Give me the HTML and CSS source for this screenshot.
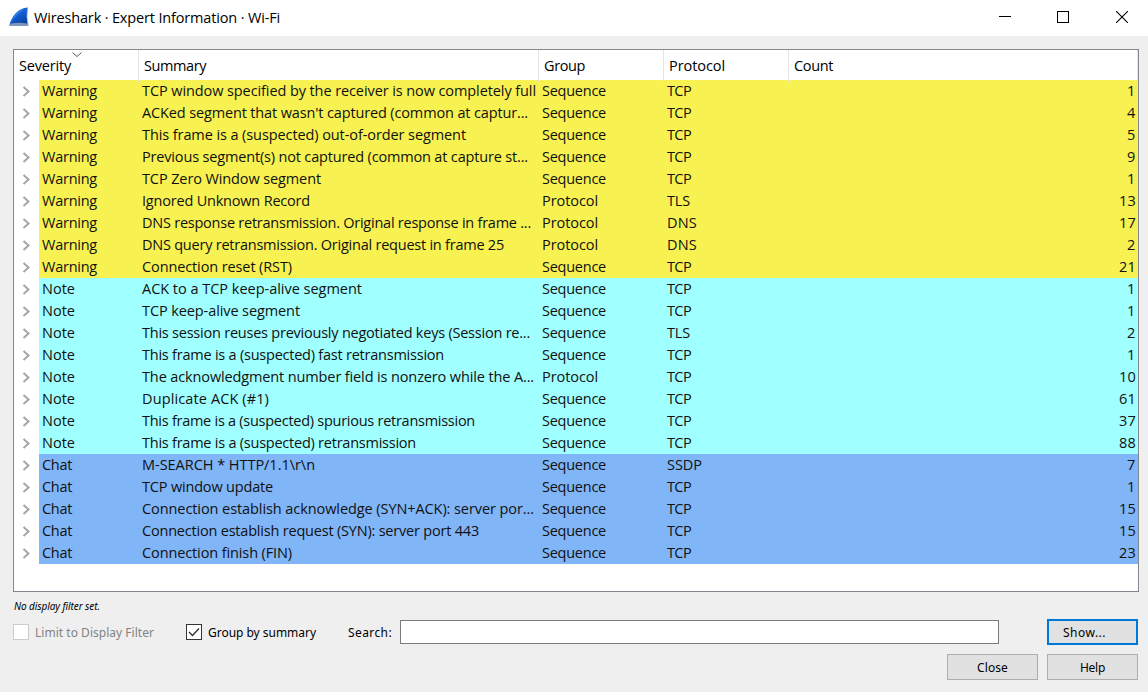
FILE: index.html
```html
<!DOCTYPE html>
<html lang="en">
<head>
<meta charset="utf-8">
<title>Wireshark · Expert Information · Wi-Fi</title>
<link rel="stylesheet" href="styles.css">
</head>
<body>
<header class="titlebar">
  <svg class="logo" width="20" height="20" viewBox="0 0 20 20">
    <defs>
      <linearGradient id="fin" x1="0" y1="0" x2="0.5" y2="1"><stop offset="0" stop-color="#1b67dc"/><stop offset=".45" stop-color="#1360d8"/><stop offset="1" stop-color="#0b43a8"/></linearGradient>
      <linearGradient id="shine" x1="0" y1="0" x2="1" y2="1"><stop offset="0" stop-color="#6db4f8"/><stop offset="1" stop-color="#1560d8" stop-opacity="0"/></linearGradient>
    </defs>
    <path d="M.3 18.6C3 9 8.500 1.100 19 .5C17.600 6 17.600 13 19.300 18.600Z" fill="url(#fin)"/>
    <path d="M2 16C5 8 9 2.500 17.500 1.300C11 4 7 9 2 16Z" fill="url(#shine)"/>
    <path d="M.3 18.700L1 16.700Q10 14.800 18.800 16.700L19.400 18.700Z" fill="#7d94b8"/>
    <path d="M18.600 1Q17.200 9 19 18" fill="none" stroke="#9fb4d4" stroke-width=".8"/>
  </svg>
  <h1 class="title"><span data-w="246">Wireshark · Expert Information · Wi-Fi</span></h1>
  <div class="controls">
    <svg width="12" height="12"><path d="M0 5.500H12" stroke="#000"/></svg>
    <svg width="12" height="12"><rect x=".5" y=".5" width="11" height="11" fill="none" stroke="#000"/></svg>
    <svg class="close" width="12" height="12"><path d="M0 0L12 12M12 0L0 12" stroke="#000" stroke-width="1.100"/></svg>
  </div>
</header>
<main class="dialog">
  <section class="tree">
    <div class="head">
      <div><svg class="sort" width="10" height="5"><path d="M.5 .5L5 4.500L9.500 .5" fill="none" stroke="#555"/></svg><span data-w="52">Severity</span></div>
      <div><span data-w="62">Summary</span></div>
      <div><span data-w="41">Group</span></div>
      <div><span data-w="56">Protocol</span></div>
      <div><span data-w="39">Count</span></div>
    </div>
    <div id="rows"></div>
  </section>
  <p class="hint"><span data-w="86">No display filter set.</span></p>
  <div class="options">
    <label class="check off"><i class="box"></i><span data-w="119">Limit to Display Filter</span></label>
    <label class="check group"><i class="box"><svg width="14" height="14"><path d="M2 7L5.500 10.500L12 3.500" fill="none" stroke="#333" stroke-width="1.400"/></svg></i><span data-w="108">Group by summary</span></label>
    <span class="searchlabel"><span data-w="44">Search:</span></span>
    <div class="search"></div>
    <div class="button primary"><span data-w="43">Show...</span></div>
  </div>
  <div class="actions">
    <div class="button"><span data-w="31">Close</span></div>
    <div class="button"><span data-w="25">Help</span></div>
  </div>
</main>
<script src="app.js"></script>
</body>
</html>
```
FILE: styles.css
```css
* { box-sizing: border-box; }
body { margin: 0; width: 1148px; height: 692px; overflow: hidden; background: #efefef; color: #000; font-family: "Open Sans", "Noto Sans", sans-serif; font-size: 14.5px; }
span { white-space: pre; }
svg { display: block; flex: none; }
.titlebar { height: 36px; background: #fff; display: flex; align-items: center; padding: 0 20px 0 9px; }
.logo { margin-top: -2px; }
.title { margin: 0 0 0 5px; font-size: 14.5px; font-weight: 400; line-height: 36px; }
.controls { margin-left: auto; display: flex; gap: 46px; margin-top: -2px; }
.close { margin-left: 1px; }
.dialog { padding: 13px 9px 0 13px; }
.tree { width: 1126px; height: 543px; border: 1px solid #828790; background: #fff; }
.head { height: 30px; display: grid; grid-template-columns: 125px 400px 125px 125px 349px; }
.head div { border-right: 1px solid #e5e5e5; padding-left: 5px; line-height: 32px; position: relative; }
.sort { position: absolute; left: 58px; top: 2px; }
.row { height: 22px; display: grid; grid-template-columns: 25px 100px 400px 125px 1fr auto; line-height: 22px; padding-right: 2px; color: #111; }
.row span { padding-left: 3px; }
.arrow { background: #fff; padding: 6px 0 0 8px; }
.warning { background: #f7f251; }
.note { background: #a0ffff; }
.chat { background: #80b5f7; }
.hint { margin: 5px 0 0 1px; height: 17px; line-height: 18px; font-size: 10px; font-style: italic; font-family: "Noto Sans", sans-serif; }
.options { margin-top: 5px; height: 26px; display: flex; align-items: center; font: 12px "Noto Sans", sans-serif; }
.check { display: flex; align-items: center; gap: 6px; width: 173px; }
.group { width: 162px; }
.off { color: #838383; }
.box { width: 16px; height: 16px; border: 1px solid #333; background: #fff; flex: none; }
.off .box { border-color: #ccc; }
.searchlabel { width: 52px; }
.search { width: 599px; height: 24px; border: 1px solid #7a7a7a; background: #fff; }
.button { width: 91px; height: 26px; border: 1px solid #adadad; background: #e1e1e1; display: flex; align-items: center; justify-content: center; font: 12px "Noto Sans", sans-serif; }
.primary { border: 2px solid #0078d7; margin-left: 48px; justify-content: flex-start; padding-left: 14px; }
.actions { display: flex; justify-content: flex-end; gap: 9px; margin-top: 9px; padding-right: 1px; }
```
FILE: app.js
```js
const widths = { Warning: 55, Note: 33, Chat: 30, Sequence: 64, Protocol: 56, TCP: 24, TLS: 23, DNS: 30, SSDP: 35 };
const rows = [
  ["Warning", "TCP window specified by the receiver is now completely full", 394, "Sequence", "TCP", 1],
  ["Warning", "ACKed segment that wasn't captured (common at captur...", 386, "Sequence", "TCP", 4],
  ["Warning", "This frame is a (suspected) out-of-order segment", 324, "Sequence", "TCP", 5],
  ["Warning", "Previous segment(s) not captured (common at capture st...", 386, "Sequence", "TCP", 9],
  ["Warning", "TCP Zero Window segment", 179, "Sequence", "TCP", 1],
  ["Warning", "Ignored Unknown Record", 168, "Protocol", "TLS", 13],
  ["Warning", "DNS response retransmission. Original response in frame ...", 389, "Protocol", "DNS", 17],
  ["Warning", "DNS query retransmission. Original request in frame 25", 362, "Protocol", "DNS", 2],
  ["Warning", "Connection reset (RST)", 150, "Sequence", "TCP", 21],
  ["Note", "ACK to a TCP keep-alive segment", 220, "Sequence", "TCP", 1],
  ["Note", "TCP keep-alive segment", 158, "Sequence", "TCP", 1],
  ["Note", "This session reuses previously negotiated keys (Session re...", 388, "Sequence", "TLS", 2],
  ["Note", "This frame is a (suspected) fast retransmission", 302, "Sequence", "TCP", 1],
  ["Note", "The acknowledgment number field is nonzero while the A...", 392, "Protocol", "TCP", 10],
  ["Note", "Duplicate ACK (#1)", 127, "Sequence", "TCP", 61],
  ["Note", "This frame is a (suspected) spurious retransmission", 333, "Sequence", "TCP", 37],
  ["Note", "This frame is a (suspected) retransmission", 274, "Sequence", "TCP", 88],
  ["Chat", "M-SEARCH * HTTP/1.1\\r\\n", 173, "Sequence", "SSDP", 7],
  ["Chat", "TCP window update", 131, "Sequence", "TCP", 1],
  ["Chat", "Connection establish acknowledge (SYN+ACK): server por...", 392, "Sequence", "TCP", 15],
  ["Chat", "Connection establish request (SYN): server port 443", 337, "Sequence", "TCP", 15],
  ["Chat", "Connection finish (FIN)", 150, "Sequence", "TCP", 23]
];
const cell = (text, w) => `<div class="cell"><span data-w="${w + 3}">${text}</span></div>`;
document.getElementById("rows").innerHTML = rows.map(([sev, sum, w, group, proto, count]) =>
  `<div class="row ${sev.toLowerCase()}"><div class="arrow"><svg width="9" height="11"><path d="M1.500 1L6.500 5.500L1.500 10" fill="none" stroke="#a6a6a6" stroke-width="2"/></svg></div>` +
  cell(sev, widths[sev]) + cell(sum, w) + cell(group, widths[group]) + cell(proto, widths[proto]) +
  `<div><span data-w="${String(count).length * 8 + 4}">${count}</span></div></div>`).join("");

document.querySelectorAll("[data-w]").forEach(el => {
  const extra = Number(el.dataset.w) - el.getBoundingClientRect().width;
  el.style.letterSpacing = extra / el.textContent.length + "px";
});
```
